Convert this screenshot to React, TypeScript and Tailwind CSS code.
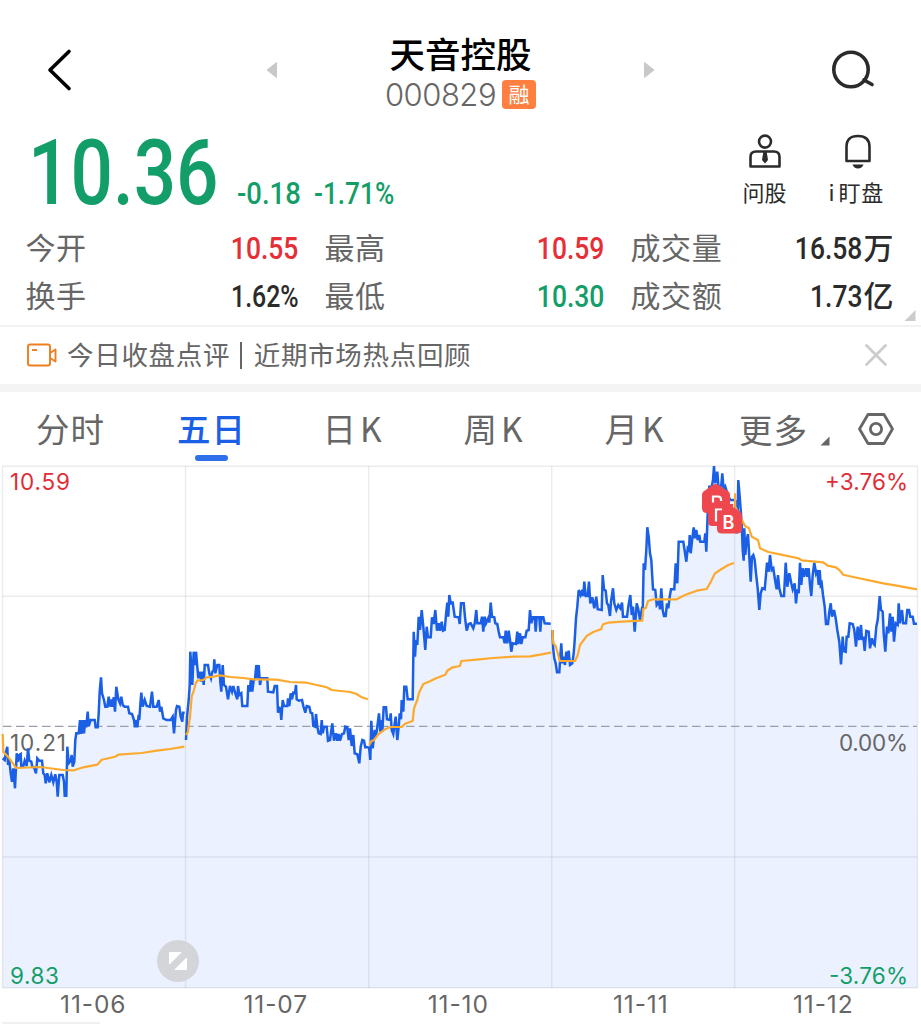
import type { ReactNode } from 'react';

type Session = {
  date: string;
  // pixel the session's own coordinates start from, three units to a pixel
  origin: [number, number];
  price: string;
  average: string;
};

const sessions: Session[] = [
  {
    date: '11-06',
    origin: [0, 640],
    price:
      '8,355 14,360 18,335 22,320 24,375 28,360 32,400 36,425 40,385 45,445 50,340 54,365 58,345 62,342 64,378 70,378 74,362 80,378 84,325 88,362 94,365 97,380 102,382 108,400 112,355 118,362 126,362 130,400 134,405 137,430 142,400 148,427 154,405 160,427 166,403 170,425 173,470 178,405 188,405 192,425 194,467 199,467 202,320 206,370 212,362 215,345 218,380 223,365 226,300 229,280 236,280 240,240 244,282 248,240 252,280 256,240 259,262 263,215 266,258 272,240 284,240 287,262 293,262 296,220 299,155 303,112 306,160 312,180 316,200 322,200 326,170 330,200 334,178 337,200 341,172 345,215 349,140 355,178 360,190 364,170 368,195 374,200 384,200 388,220 396,222 402,240 405,262 410,240 412,262 416,225 418,240 421,195 424,158 428,200 434,180 440,198 450,200 456,155 460,200 470,200 476,180 480,215 484,200 490,235 500,240 512,240 518,230 522,280 528,210 531,198 538,200 542,230 547,245 549,218 554,218',
    average:
      '8,282 10,335 28,355 48,384 120,381 190,390 222,391 250,382 292,374 305,359 345,350 355,344 425,339 470,332 510,327 553,320',
  },
  {
    date: '11-07',
    origin: [180, 640],
    price:
      '18,300 21,230 26,180 29,135 31,35 34,80 37,135 41,35 46,75 48,35 51,70 55,115 60,95 64,125 68,95 71,135 74,75 84,75 88,100 93,115 97,95 101,90 103,58 106,100 112,75 118,75 121,125 124,155 128,75 132,135 138,140 144,178 150,138 156,155 160,138 166,160 172,178 174,138 178,165 184,160 187,198 202,198 205,135 209,155 213,115 217,155 221,120 225,118 229,75 233,115 236,75 240,135 244,115 262,115 264,155 280,157 284,138 291,138 294,218 298,200 302,218 304,240 308,180 312,198 322,198 324,175 328,198 332,160 336,178 340,158 345,160 348,135 350,178 356,182 366,180 370,198 376,218 380,198 388,200 392,218 397,220 400,258 405,260 408,222 412,260 416,280 422,282 425,240 428,280 432,260 440,260 444,302 450,300 457,250 462,302 468,280 472,302 476,282 480,302 486,282 492,280 496,260 502,262 506,300 510,265 515,318 520,285 524,340 532,343 538,370 542,320 547,300 552,302 556,322 566,322',
    average:
      '18,285 24,275 30,230 35,170 42,150 47,130 52,122 70,120 80,112 100,110 120,106 150,111 190,114 220,118 290,119 330,126 380,128 440,142 455,150 510,156 530,162 545,172 564,178',
  },
  {
    date: '11-10',
    origin: [360, 580],
    price:
      '27,500 31,540 34,422 38,505 44,450 48,470 52,440 57,400 61,455 64,420 67,455 71,382 78,382 81,418 90,420 92,400 95,450 100,462 104,430 107,410 112,480 116,440 119,400 123,418 125,360 130,395 133,320 139,320 143,358 158,358 161,155 165,230 168,180 172,195 176,110 180,150 185,90 190,140 196,210 200,140 204,172 212,172 216,112 221,132 226,90 231,152 236,130 240,152 245,125 249,152 254,150 259,95 262,68 265,110 268,45 272,70 278,68 284,110 296,112 299,132 303,70 311,70 316,120 320,152 326,132 332,130 340,145 344,130 349,90 352,130 362,130 366,110 370,155 374,110 378,130 386,112 388,128 392,68 396,110 403,112 406,130 412,132 416,155 420,172 430,172 434,190 437,152 442,190 446,152 450,180 454,215 458,190 468,192 472,155 475,192 480,160 484,192 488,172 496,172 500,152 506,150 510,90 514,130 518,112 524,112 527,155 530,112 538,112 541,155 544,112 550,112 554,130 572,131',
    average:
      '28,495 34,484 42,480 55,463 75,448 92,441 125,441 135,431 158,423 162,385 172,360 177,338 190,312 210,304 225,296 240,290 256,284 262,272 278,262 300,258 304,243 350,239 400,234 460,230 510,229 545,223 573,218',
  },
  {
    date: '11-11',
    origin: [545, 510],
    price:
      '22,360 25,420 28,445 32,460 36,487 43,487 46,440 49,400 52,460 56,440 60,465 64,425 68,455 71,422 75,465 82,460 86,430 89,390 93,325 97,290 101,240 107,255 112,240 115,258 118,215 122,258 128,258 132,215 136,280 142,262 148,295 154,260 158,298 170,300 173,195 177,238 182,242 186,280 190,285 195,318 198,275 204,235 208,280 214,300 220,285 226,295 231,278 234,320 246,320 250,290 256,255 260,315 264,290 269,365 275,280 280,298 285,330 290,300 293,305 296,160 300,180 304,120 307,52 311,80 315,130 319,150 324,238 331,240 335,285 342,275 345,298 349,235 353,300 357,318 362,318 366,280 370,295 374,260 378,238 388,238 392,160 397,220 401,95 415,95 418,115 424,155 428,115 432,120 434,75 437,130 442,85 446,52 450,85 454,60 458,90 463,75 466,95 478,95 481,70 484,125 488,10 493,-70 500,-70 504,-90 507,-132 511,-80 517,-115 521,-60 529,-75 532,-110 536,-60 541,-70 547,-50 555,-30 567,-30',
    average:
      '22,360 25,400 32,408 38,430 44,453 90,453 98,435 105,405 126,377 145,366 168,358 174,343 190,338 230,335 292,332 295,297 303,293 309,273 325,268 395,268 420,255 455,242 485,237 492,225 500,210 510,190 525,180 550,165 567,159',
  },
  {
    date: '11-12',
    origin: [730, 460],
    price:
      '16,120 19,220 22,210 25,60 29,110 35,190 38,270 41,302 43,205 46,285 50,240 54,222 58,290 62,365 66,290 70,285 74,300 78,340 83,385 88,450 92,400 97,385 104,388 108,345 111,308 116,335 120,285 125,330 130,325 136,365 140,388 144,345 148,385 154,408 162,408 167,308 172,380 178,340 184,370 188,388 194,370 198,430 202,388 206,400 210,308 214,375 218,325 222,350 228,325 232,350 236,325 240,375 244,408 248,345 253,308 258,340 262,330 266,375 269,330 272,375 275,370 279,405 284,440 288,492 294,492 298,455 302,430 306,470 312,450 317,475 322,510 328,545 333,613 338,530 341,573 347,575 350,530 355,530 359,490 368,492 373,510 378,560 383,500 388,540 393,495 396,540 400,530 404,573 409,513 416,515 420,565 426,535 430,550 434,555 439,500 443,480 449,408 453,450 458,455 461,520 466,575 471,500 475,520 480,460 484,515 488,470 492,545 497,490 503,495 506,430 510,490 516,450 520,490 528,490 532,450 537,450 541,470 548,470 552,491 561,491',
    average:
      '15,100 16,140 36,180 45,198 57,205 65,230 84,240 90,265 115,276 150,283 205,295 215,301 280,307 293,317 318,322 330,332 340,344 370,351 460,370 500,377 561,388',
  },
];

const BOTTOM = 988;

function toPoints(series: string, [ox, oy]: [number, number]) {
  return series.split(' ').map((pair) => {
    const [x, y] = pair.split(',').map(Number);
    return [+(ox + x / 3).toFixed(1), +(oy + y / 3).toFixed(1)];
  });
}

function Chart() {
  const lines = sessions.map((s) => ({
    price: toPoints(s.price, s.origin),
    average: toPoints(s.average, s.origin),
  }));
  const all = lines.flatMap((l) => l.price);
  const area = `2.5,${BOTTOM} ${all.join(' ')} 917.5,${BOTTOM}`;

  return (
    <svg viewBox="0 465 921 525" className="block w-[921px] h-[525px] font-['Inter',sans-serif]">
      <polygon points={area} fill="#ebf1fe" />
      <g stroke="#808080" strokeOpacity="0.15" strokeWidth="1.4" fill="none">
        <path d="M2.5 466.3H917.5V987.7H2.5Z" />
        <path d="M2.5 596.3H917.5M2.5 857H917.5" />
        <path d="M185.5 466V988M368.7 466V988M551.7 466V988M734.6 466V988" />
      </g>
      <path d="M3 726.4H917" stroke="#9aa0a8" strokeWidth="1.3" strokeDasharray="8.5 4.5" />
      <text x="10" y="751" fontSize="22.5" fill="#666" textLength="56">10.21</text>
      {lines.map((l, i) => (
        <g key={i} fill="none" strokeLinejoin="miter" strokeMiterlimit="4">
          <polyline points={l.price.join(' ')} stroke="#1a5fe6" strokeWidth="2.5" />
          <polyline points={l.average.join(' ')} stroke="#fca92c" strokeWidth="2.2" strokeLinejoin="round" />
        </g>
      ))}

      <g fill="#ee484e">
        <path d="M715.5 484 Q717 484 718.5 485L727 490.5Q730 492 730 495V508Q730 513 725 513H707Q702 513 702 508V495Q702 492 705 490.5L712.5 485Q714 484 715.5 484Z" />
        <path d="M708 504H733V526H712Q708 526 708 522Z" />
        <path d="M721 506H731L738 510Q742 512 742 516V529Q742 533.5 737 533.5H722Q717 533.5 717 529V512Z" />
      </g>
      <path d="M713 504V496.5H718Q721 496.5 721 499.5V501M716 521.5V509.5H722" fill="none" stroke="#fff" strokeWidth="2.2" />
      <path d="M710 502.5H726V507H710ZM718.5 510.5H737V528H718.5Z" fill="#ee484e" />
      <text x="722.5" y="528.5" fontSize="18" fontWeight="600" fill="#fff">B</text>

      <g fontSize="22.5">
        <text x="10" y="489.5" fill="#e12d37" textLength="60">10.59</text>
        <text x="825" y="489.5" fill="#e12d37" textLength="83">+3.76%</text>
        <text x="839" y="750.5" fill="#666" textLength="69">0.00%</text>
        <text x="10" y="984" fill="#139e69" textLength="49">9.83</text>
        <text x="829" y="984" fill="#139e69" textLength="79">-3.76%</text>
      </g>

      <circle cx="178" cy="961" r="21" fill="#d3d5d9" />
      <path d="M169.5 952.5H181L169.5 964ZM186.5 958V969.5H175Z" fill="#fff" stroke="#fff" strokeLinejoin="round" />
    </svg>
  );
}

function Digits({ children, narrow }: { children: ReactNode; narrow?: boolean }) {
  return (
    <span
      className={`inline-block origin-right font-['Roboto',sans-serif] text-[31.5px] font-medium ${narrow ? 'scale-x-[0.79]' : 'scale-x-[0.84]'}`}
    >
      {children}
    </span>
  );
}

const stats = [
  { label: '今开', value: '10.55', color: 'text-[#e62e36]' },
  { label: '最高', value: '10.59', color: 'text-[#e62e36]' },
  { label: '成交量', value: '16.58', unit: '万', color: 'text-[#2b2b2b]' },
  { label: '换手', value: '1.62%', color: 'text-[#2b2b2b]' },
  { label: '最低', value: '10.30', color: 'text-[#139e69]' },
  { label: '成交额', value: '1.73', unit: '亿', color: 'text-[#2b2b2b]' },
];

function Stats() {
  return (
    <div className="relative grid h-[103px] grid-cols-[273px_280px_263px] grid-rows-[48px_48px] gap-x-[26px] border-b-2 border-[#f2f2f3] pl-[25.5px]">
      {stats.map((s) => (
        <div key={s.label} className="flex items-center justify-between leading-none">
          <span className="-mt-[5px] text-[30px] tracking-[0.6px] text-[#666]">{s.label}</span>
          <span className={`flex items-center ${s.color}`}>
            <span className="mt-[2px]">
              <Digits narrow={s.value.endsWith('%')}>{s.value}</Digits>
            </span>
            {s.unit && <span className="-mt-[5px] ml-px text-[30px] font-medium">{s.unit}</span>}
          </span>
        </div>
      ))}
      <svg className="absolute right-[5px] bottom-[3px]" width="12" height="13" viewBox="0 0 12 13">
        <path d="M11.5 1V12H0.5Z" fill="#ccc" />
      </svg>
    </div>
  );
}

function Header() {
  return (
    <header className="flex h-[120px] items-center justify-between pr-[46px] pl-[45px]">
      <svg className="mt-[19px]" width="28" height="44" viewBox="0 0 28 44" fill="none">
        <path d="M24 3.5L5 22L24 40.5" stroke="#000" strokeWidth="3.6" strokeLinecap="round" strokeLinejoin="round" />
      </svg>
      <div className="mt-[19px] ml-[19px] flex w-[389px] items-center justify-between">
        <svg width="11" height="18" viewBox="0 0 11 18">
          <path d="M10.5 1.5V16.5L1 9Z" fill="#c8c8c8" stroke="#c8c8c8" strokeLinejoin="round" />
        </svg>
        <div className="-mt-[1px] -mb-[7px] flex flex-col items-center leading-none">
          <h1 className="mb-[4px] text-[35.5px] leading-[40px] font-medium text-black">天音控股</h1>
          <div className="flex h-[36px] items-center gap-[6px]">
            <span className="-mt-px font-['Inter',sans-serif] text-[31px] font-light tracking-[-0.5px] text-[#666]">000829</span>
            <span className="flex h-[29px] w-[34px] items-center justify-center rounded-[4px] bg-[#ff7f41] pb-[2px] text-[21px] text-white">融</span>
          </div>
        </div>
        <svg width="11" height="18" viewBox="0 0 11 18">
          <path d="M0.5 1.5V16.5L10 9Z" fill="#c8c8c8" stroke="#c8c8c8" strokeLinejoin="round" />
        </svg>
      </div>
      <svg className="mt-[19px]" width="46" height="44" viewBox="0 0 46 44" fill="none" stroke="#2b2b2b" strokeWidth="3.6">
        <circle cx="22" cy="21.5" r="17.2" />
        <path d="M35 32L43 36.5" strokeLinecap="round" />
      </svg>
    </header>
  );
}

function Quote() {
  return (
    <div className="flex h-[104px] justify-between pr-[37px] pl-[28px] text-[#139e69]">
      <div className="flex items-baseline pt-[2px] font-['Roboto',sans-serif] font-medium">
        <span className="w-[209px] origin-left scale-x-[0.83] text-[90px] leading-[104px]">10.36</span>
        <span className="w-[77px] origin-left scale-x-[0.9] text-[30.5px]">-0.18</span>
        <span className="origin-left scale-x-[0.86] text-[30.5px]">-1.71%</span>
      </div>
      <div className="flex gap-[42px] pt-[13px] text-[22px] leading-none text-[#2b2b2b]">
        <div className="flex flex-col items-center gap-[11px]">
          <svg width="36" height="36" viewBox="0 0 36 36" fill="none" stroke="#2b2b2b" strokeWidth="2.6">
            <circle cx="18" cy="8.6" r="6" />
            <path d="M3.5 33.5V24Q3.5 18.5 9 18.5H27Q32.5 18.5 32.5 24V33.5Z" strokeLinejoin="round" />
            <path d="M16.3 19H19.7L21 27L18 30.5L15 27Z" fill="#2b2b2b" stroke="none" />
          </svg>
          <span>问股</span>
        </div>
        <div className="flex flex-col items-center gap-[11px]">
          <svg className="ml-[4px]" width="30" height="36" viewBox="0 0 30 36" fill="none" stroke="#2b2b2b" strokeWidth="2.6">
            <path d="M3.5 28V14Q3.5 3 15 3T26.5 14V28Z" strokeLinejoin="round" />
            <path d="M9.5 31.5H20.5Q19 35.5 15 35.5T9.5 31.5Z" fill="#2b2b2b" stroke="none" />
          </svg>
          <span className="tracking-[0.8px]"><span className="mr-[3px]">i</span>盯盘</span>
        </div>
      </div>
    </div>
  );
}

function Notice() {
  return (
    <div className="flex h-[57px] items-center pr-[33px] pb-px pl-[26px] text-[26.5px] tracking-[0.7px] text-[#666]">
      <svg width="32" height="26" viewBox="0 0 32 26" fill="none" stroke="#ee7e1f" strokeWidth="1.9" strokeLinejoin="round">
        <rect x="2" y="2.5" width="22" height="21" rx="2" />
        <path d="M6 8H11" />
        <path d="M24 11L29.5 7.5V19.5L24 16" />
      </svg>
      <span className="-mt-[2px] ml-[9px] grow">
        今日收盘点评<span className="mr-[12px] ml-[10px] inline-block h-[27px] w-[1.5px] bg-[#666] align-[-4px]" />近期市场热点回顾
      </span>
      <svg width="24" height="24" viewBox="0 0 24 24" stroke="#ccc" strokeWidth="2.8" strokeLinecap="round">
        <path d="M2.5 2.5L21.5 21.5M21.5 2.5L2.5 21.5" />
      </svg>
    </div>
  );
}

const tabs = ['分时', '五日', '日K', '周K', '月K'];

function Tabs() {
  return (
    <nav className="flex h-[73px] text-[33.5px] leading-[72px] tracking-[1px] text-[#666]">
      {tabs.map((tab) => (
        <div key={tab} className={`relative w-[141px] text-center ${tab === '五日' ? 'font-medium text-[#1a5fe6]' : ''}`}>
          {tab[0]}
          <span className={tab[1] === 'K' ? 'ml-[3px]' : ''}>{tab[1]}</span>
          {tab === '五日' && <span className="absolute bottom-[4px] left-[54px] h-[6px] w-[33px] rounded-full bg-[#2f6fea]" />}
        </div>
      ))}
      <div className="flex items-center pl-[34px]">
        <span>更多</span>
        <svg className="mt-[24px] ml-[12px]" width="10" height="10" viewBox="0 0 10 10">
          <path d="M9.5 0.5V9.5H0.5Z" fill="#666" />
        </svg>
        <svg className="ml-[27px]" width="38" height="36" viewBox="0 0 38 36" fill="none" stroke="#666" strokeWidth="2.8" strokeLinejoin="round">
          <path d="M11 3.5H27L35.5 18L27 32.5H11L2.5 18Z" />
          <circle cx="19" cy="18" r="5.6" />
        </svg>
      </div>
    </nav>
  );
}

export default function App() {
  return (
    <div className="h-[1024px] w-[921px] overflow-hidden bg-white font-['Noto_Sans_CJK_SC',sans-serif]">
      <Header />
      <Quote />
      <Stats />
      <Notice />
      <div className="h-[8px] bg-[#f4f4f4]" />
      <Tabs />
      <Chart />
      <div className="flex h-[32px] pl-[2px] font-['Inter',sans-serif] text-[24.5px] leading-[29px] tracking-[0.9px] text-[#666]">
        {sessions.map((s) => (
          <span key={s.date} className="w-[182.5px] text-center">{s.date}</span>
        ))}
      </div>
      <div className="ml-[2px] h-[2px] w-[98px] bg-[#f0f0f0]" />
    </div>
  );
}
